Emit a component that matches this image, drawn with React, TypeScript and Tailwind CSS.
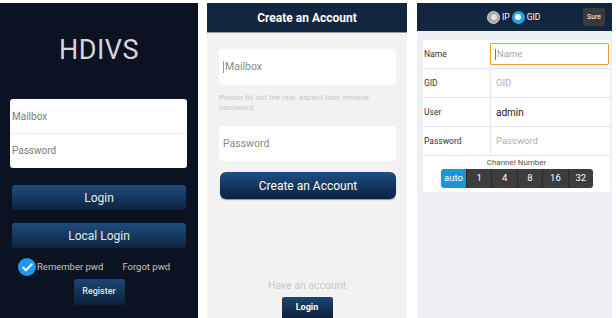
import { Check } from "lucide-react";

const font = { fontFamily: "Roboto, 'Liberation Sans', sans-serif" };

function LoginPanel() {
  return (
    <div className="w-[198px] h-full bg-[#0b1222] flex flex-col items-center">
      <div className="mt-[31px] text-[27px] leading-[32px] text-[#d4d6da] tracking-[0.5px]">HDIVS</div>
      <div className="mt-[33px] w-[177px] h-[69px] self-start ml-[10px] bg-white rounded-[3px] flex flex-col text-[10px] text-[#7a7a7a]">
        <div className="h-[35px] flex items-center pl-[2px] border-b border-[#eeeeee]">Mailbox</div>
        <div className="h-[33px] flex items-center pl-[2px]">Password</div>
      </div>
      <button className="mt-[17px] w-[174px] h-[25px] rounded-[3px] bg-gradient-to-b from-[#1f4d7e] to-[#0e2440] text-[12px] text-[#e4e8ee]">
        Login
      </button>
      <button className="mt-[13px] w-[174px] h-[25px] rounded-[3px] bg-gradient-to-b from-[#1f4d7e] to-[#0e2440] text-[12px] text-[#e4e8ee]">
        Local Login
      </button>
      <div className="mt-[10px] w-full flex items-center pl-[18px] text-[9.5px] text-[#c2c6cc]">
        <div className="w-[18px] h-[18px] rounded-full bg-[#2196f3] flex items-center justify-center">
          <Check className="w-[13px] h-[13px] text-white" strokeWidth={3.5} />
        </div>
        <span className="ml-[1px]">Remember pwd</span>
        <span className="ml-[19px]">Forgot pwd</span>
      </div>
      <button className="mt-[3px] w-[51px] h-[26px] rounded-[2px] bg-gradient-to-b from-[#1c4675] to-[#0d2138] text-[9px] font-medium text-[#dfe4ea]">
        Register
      </button>
    </div>
  );
}

function CreatePanel() {
  return (
    <div className="w-[200px] h-full bg-[#f2f2f2] flex flex-col">
      <div className="h-[30px] bg-[#13263f] border-b border-[#8f9aa6] flex items-center justify-center text-[12px] font-bold text-white">
        Create an Account
      </div>
      <div className="mt-[16px] mx-[12px] w-[177px] h-[36px] bg-white rounded-[4px] flex items-center pl-[4px] text-[10.5px] text-[#8a8a8a]">
        <span className="w-px h-[12px] bg-[#9a9a9a] mr-[1px]" />
        Mailbox
      </div>
      <div className="mt-[8px] mx-[12px] w-[160px] text-[8px] leading-[10px] text-[#c8c8c8]">
        Please fill out the real, aspect later retrieve password
      </div>
      <div className="mt-[13px] mx-[12px] w-[177px] h-[35px] bg-white rounded-[4px] flex items-center pl-[4px] text-[10.5px] text-[#8a8a8a]">
        Password
      </div>
      <button className="mt-[11px] mx-[13px] w-[176px] h-[27px] rounded-[6px] bg-gradient-to-b from-[#1f4f83] to-[#0b2140] text-[12px] text-white shadow-[0_1px_1px_rgba(0,0,0,0.4)]">
        Create an Account
      </button>
      <div className="mt-[80px] text-center text-[10.5px] leading-[13px] text-[#c8c8c8]">Have an account</div>
      <button className="mt-[5px] self-center w-[51px] h-[21px] rounded-t-[2px] bg-gradient-to-b from-[#1c4675] to-[#0d2138] text-[9px] font-bold text-white">
        Login
      </button>
    </div>
  );
}

function Row({ label, children }: { label: string; children: React.ReactNode }) {
  return (
    <div className="h-[29px] flex items-center border-b border-[#e6e6e6]">
      <div className="w-[67px] pl-[1px] text-[8.5px] text-[#333]">{label}</div>
      {children}
    </div>
  );
}

function DevicePanel() {
  const segs = ["1", "4", "8", "16", "32"];
  return (
    <div className="w-[195px] h-full bg-[#eff0f4] flex flex-col">
      <div className="h-[28px] bg-[#13263f] flex items-center text-[8.5px] text-white">
        <div className="ml-[70px] w-[13px] h-[13px] rounded-full bg-[#a9a9a9] border border-[#d0d0d0] flex items-center justify-center">
          <div className="w-[6px] h-[6px] rounded-full bg-[#e4e4e4]" />
        </div>
        <span className="ml-[2px]">IP</span>
        <div className="ml-[2px] w-[13px] h-[13px] rounded-full bg-[#2a9ee6] flex items-center justify-center">
          <div className="w-[6px] h-[6px] rounded-full bg-white" />
        </div>
        <span className="ml-[2px]">GID</span>
        <div className="ml-auto mr-[7px] w-[22px] h-[18px] bg-[#3a3a3a] rounded-[1px] flex items-center justify-center text-[7px]">
          Sure
        </div>
      </div>
      <div className="mt-[9px] ml-[6px] w-[187px] h-[152px] bg-white rounded-[3px] flex flex-col">
        <Row label="Name">
          <div className="w-[119px] h-[22px] border border-[#f39a32] rounded-[1px] flex items-center pl-[4px] text-[9.5px] text-[#a8a8a8]">
            <span className="w-px h-[11px] bg-[#777] mr-[1px]" />
            Name
          </div>
        </Row>
        <Row label="GID">
          <div className="w-[119px] h-[29px] border-l border-[#e6e6e6] flex items-center pl-[5px] text-[9.5px] text-[#b0b0b0]">
            GID
          </div>
        </Row>
        <Row label="User">
          <div className="w-[119px] h-[29px] border-l border-[#e6e6e6] flex items-center pl-[5px] text-[10px] text-[#222]">
            admin
          </div>
        </Row>
        <Row label="Password">
          <div className="w-[119px] h-[29px] border-l border-[#e6e6e6] flex items-center pl-[5px] text-[9.5px] text-[#b0b0b0]">
            Password
          </div>
        </Row>
        <div className="mt-[1px] text-center text-[8px] leading-[11px] text-[#555]">Channel Number</div>
        <div className="mt-[1px] ml-[18px] flex h-[19px] w-[152px] rounded-[3px] overflow-hidden text-[9.5px] text-white">
          <div className="w-[25px] bg-[#1e95d8] flex items-center justify-center">auto</div>
          {segs.map((s) => (
            <div key={s} className="flex-1 bg-[#3d3d3d] border-l border-[#2a2a2a] flex items-center justify-center">
              {s}
            </div>
          ))}
        </div>
      </div>
    </div>
  );
}

export default function App() {
  return (
    <div className="w-[616px] h-[318px] bg-white pt-[3px] overflow-hidden" style={font}>
      <div className="flex h-[315px]">
        <LoginPanel />
        <div className="w-[9px]" />
        <CreatePanel />
        <div className="w-[10px]" />
        <DevicePanel />
      </div>
    </div>
  );
}
